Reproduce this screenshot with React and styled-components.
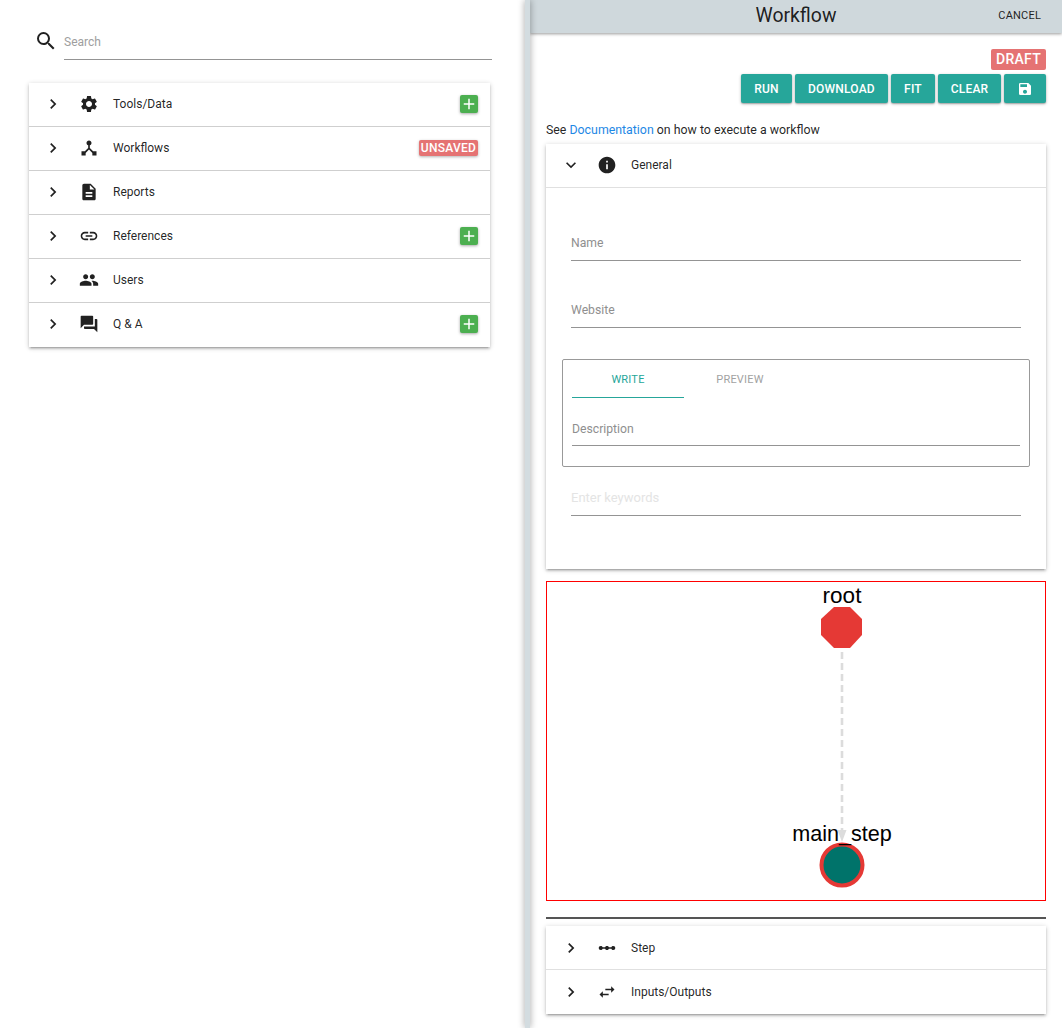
import React from 'react';
import styled, { createGlobalStyle } from 'styled-components';
import {
  MdSearch, MdChevronRight, MdExpandMore, MdSettings, MdDeviceHub, MdDescription,
  MdLink, MdPeople, MdQuestionAnswer, MdInfo, MdSave, MdLinearScale, MdSwapHoriz, MdAdd,
} from 'react-icons/md';

const GlobalStyle = createGlobalStyle`
  html, body {
    margin: 0;
    padding: 0;
    height: 100%;
    background: #fff;
    font-family: Roboto, "Liberation Sans", sans-serif;
    color: rgba(0, 0, 0, 0.87);
    overflow: hidden;
  }
  * { box-sizing: border-box; }
`;

const Page = styled.div`
  display: flex;
  width: 1062px;
  height: 1028px;
  overflow: hidden;
`;

const LeftPane = styled.div`
  width: 525px;
  flex: none;
  padding: 29px 35px 0 29px;
`;

const SearchRow = styled.div`
  display: flex;
  align-items: flex-start;
  height: 54px;
  margin-right: -2px;
`;

const SearchIcon = styled(MdSearch)`
  font-size: 24px;
  margin-left: 5px;
  margin-right: 6px;
  flex: none;
  color: #212121;
`;

const SearchField = styled.div`
  flex: 1;
  height: 31px;
  border-bottom: 1px solid #949494;
  font-size: 12px;
  line-height: 26px;
  color: #9e9e9e;
`;

const Card = styled.div`
  background: #fff;
  box-shadow: 0 1px 5px rgba(0, 0, 0, 0.2), 0 2px 2px rgba(0, 0, 0, 0.14), 0 3px 1px -2px rgba(0, 0, 0, 0.12);
`;

const Row = styled.div`
  display: flex;
  align-items: center;
  height: 44px;
  padding-left: ${p => (p.$inset ? 15 : 14)}px;
  padding-right: 12px;
  padding-bottom: ${p => p.$lift || 0}px;
  font-size: 12px;
  border-bottom: 1px solid ${p => p.$line || 'transparent'};
`;

const Chevron = styled.span`
  display: flex;
  width: 24px;
  margin-right: 10px;
  font-size: 20px;
  color: #212121;
`;

const RowIcon = styled.span`
  display: flex;
  justify-content: center;
  width: 24px;
  margin-right: 12px;
  font-size: 20px;
  color: #212121;
`;

const RowLabel = styled.span`
  flex: 1;
`;

const AddBadge = styled.span`
  display: flex;
  align-items: center;
  justify-content: center;
  width: 18px;
  height: 18px;
  border-radius: 2px;
  background: #4caf50;
  color: #fff;
  font-size: 18px;
  box-shadow: 0 1px 3px rgba(0, 0, 0, 0.35);
`;

const Unsaved = styled.span`
  height: 16px;
  padding: 0 2px;
  border-radius: 2px;
  background: #e57373;
  color: #fff;
  font-size: 12px;
  font-weight: 500;
  line-height: 16px;
  letter-spacing: 0.25px;
  box-shadow: 0 1px 3px rgba(0, 0, 0, 0.3);
`;

const Gutter = styled.div`
  position: relative;
  z-index: 2;
  width: 5px;
  flex: none;
  background: #d3dce0;
  box-shadow: 0 0 7px rgba(0, 0, 0, 0.4);
`;

const Drawer = styled.div`
  flex: 1;
  min-width: 0;
  background: #fff;
  display: flex;
  flex-direction: column;
`;

const Header = styled.div`
  position: relative;
  display: flex;
  align-items: center;
  justify-content: center;
  height: 33px;
  flex: none;
  background: #cfd8dc;
  box-shadow: 0 1px 3px rgba(0, 0, 0, 0.4);
  font-size: 19.4px;
  color: rgba(0, 0, 0, 0.87);
  padding-bottom: 3px;
`;

const Cancel = styled.span`
  position: absolute;
  right: 21px;
  top: 9px;
  font-size: 11px;
  letter-spacing: 0.2px;
`;

const Body = styled.div`
  padding: 16px 16px 0;
  display: flex;
  flex-direction: column;
`;

const StatusRow = styled.div`
  display: flex;
  justify-content: flex-end;
  height: 25px;
`;

const Draft = styled.span`
  height: 21px;
  width: 55px;
  text-align: center;
  border-radius: 2px;
  background: #e57373;
  color: #fff;
  font-size: 14px;
  font-weight: 500;
  line-height: 21px;
  letter-spacing: 0.3px;
`;

const Toolbar = styled.div`
  display: flex;
  justify-content: flex-end;
  gap: 3px;
  height: 29px;
`;

const ActionButton = styled.button`
  width: ${p => p.$w}px;
  padding: 0;
  border: 0;
  border-radius: 2px;
  display: flex;
  align-items: center;
  justify-content: center;
  background: #26a69a;
  color: #fff;
  font-family: inherit;
  font-size: 12px;
  font-weight: 500;
  letter-spacing: 0.2px;
  box-shadow: 0 1px 3px rgba(0, 0, 0, 0.3), 0 1px 1px rgba(0, 0, 0, 0.14);
`;

const DocsLine = styled.div`
  margin-top: 20px;
  height: 21px;
  font-size: 12.35px;
  line-height: 14px;
  a { color: #1e88e5; text-decoration: none; }
`;

const GeneralBody = styled.div`
  height: 381px;
  padding: 0 25px;
`;

const Field = styled.div`
  height: ${p => p.$h}px;
  border-bottom: 1px solid #949494;
  padding-top: ${p => p.$pt}px;
  font-size: ${p => (p.$faint ? 13 : 12.2)}px;
  line-height: 14px;
  color: ${p => (p.$faint ? '#e4e4e4' : '#8f8f8f')};
`;

const EditorBox = styled.div`
  margin: 31px -9px 0;
  height: 108px;
  border: 1px solid #999;
  border-radius: 2px;
  padding: 0 9px;
`;

const Tabs = styled.div`
  display: flex;
  height: 38px;
`;

const Tab = styled.div`
  width: 112px;
  padding-top: 14px;
  text-align: center;
  font-size: 11px;
  line-height: 12px;
  letter-spacing: 0.2px;
  color: ${p => (p.$active ? '#26a69a' : '#a2a2a2')};
  border-bottom: ${p => (p.$active ? '1px solid #26a69a' : 'none')};
`;

const Graph = styled.div`
  margin-top: 12px;
  height: 320px;
  border: 1px solid #f00;
`;

const GraphSvg = styled.svg`
  display: block;
  width: 100%;
  height: 100%;
`;

const NodeLabel = styled.text`
  font-family: "Liberation Sans", Arial, sans-serif;
  font-size: ${p => p.$size}px;
  fill: #000;
  text-anchor: middle;
`;

const Rule = styled.div`
  margin-top: 16px;
  height: 2px;
  background: #555;
`;

const LowerCard = styled(Card)`
  margin-top: 7px;
`;

const leftRows = [
  { label: 'Tools/Data', Icon: MdSettings, add: true },
  { label: 'Workflows', Icon: MdDeviceHub, unsaved: true },
  { label: 'Reports', Icon: MdDescription },
  { label: 'References', Icon: MdLink, add: true },
  { label: 'Users', Icon: MdPeople },
  { label: 'Q & A', Icon: MdQuestionAnswer, add: true },
];

function WorkflowGraph() {
  // node positions inside the 498x318 canvas
  return (
    <GraphSvg viewBox="0 0 498 318">
      <line x1="295" y1="70" x2="295" y2="248" stroke="#dcdcdc" strokeWidth="2.6" strokeDasharray="7 4" />
      <polygon points="290.5,248 299.5,248 295,260" fill="#dcdcdc" />
      <polygon points="287,25 303,25 315,37 315,53 303,66 287,66 274,53 274,37" fill="#e53935" />
      <circle cx="295" cy="283" r="20.5" fill="#00736a" stroke="#e53935" strokeWidth="4" />
      <NodeLabel $size={22.5} x="295" y="21">root</NodeLabel>
      <NodeLabel $size={21.6} x="295" y="259">main_step</NodeLabel>
    </GraphSvg>
  );
}

export default function App() {
  return (
    <Page>
      <GlobalStyle />
      <LeftPane>
        <SearchRow>
          <SearchIcon />
          <SearchField>Search</SearchField>
        </SearchRow>
        <Card>
          {leftRows.map((r, i) => (
            <Row key={r.label} $lift={2} $line={i < leftRows.length - 1 ? '#cfcfcf' : undefined}>
              <Chevron><MdChevronRight /></Chevron>
              <RowIcon><r.Icon /></RowIcon>
              <RowLabel>{r.label}</RowLabel>
              {r.add && <AddBadge><MdAdd /></AddBadge>}
              {r.unsaved && <Unsaved>UNSAVED</Unsaved>}
            </Row>
          ))}
        </Card>
      </LeftPane>
      <Gutter />
      <Drawer>
        <Header>
          Workflow
          <Cancel>CANCEL</Cancel>
        </Header>
        <Body>
          <StatusRow><Draft>DRAFT</Draft></StatusRow>
          <Toolbar>
            <ActionButton $w={51}>RUN</ActionButton>
            <ActionButton $w={93}>DOWNLOAD</ActionButton>
            <ActionButton $w={44}>FIT</ActionButton>
            <ActionButton $w={63}>CLEAR</ActionButton>
            <ActionButton $w={42}><MdSave size={16} /></ActionButton>
          </Toolbar>
          <DocsLine>See <a href="#docs">Documentation</a> on how to execute a workflow</DocsLine>
          <Card>
            <Row $inset $lift={1} $line="#e0e0e0">
              <Chevron><MdExpandMore /></Chevron>
              <RowIcon><MdInfo /></RowIcon>
              <RowLabel>General</RowLabel>
            </Row>
            <GeneralBody>
              <Field $h={73} $pt={48}>Name</Field>
              <Field $h={67} $pt={42}>Website</Field>
              <EditorBox>
                <Tabs>
                  <Tab $active>WRITE</Tab>
                  <Tab>PREVIEW</Tab>
                </Tabs>
                <Field $h={48} $pt={24}>Description</Field>
              </EditorBox>
              <Field $h={49} $pt={24} $faint>Enter keywords</Field>
            </GeneralBody>
          </Card>
          <Graph><WorkflowGraph /></Graph>
          <Rule />
          <LowerCard>
            <Row $inset $line="#e0e0e0">
              <Chevron><MdChevronRight /></Chevron>
              <RowIcon><MdLinearScale /></RowIcon>
              <RowLabel>Step</RowLabel>
            </Row>
            <Row $inset>
              <Chevron><MdChevronRight /></Chevron>
              <RowIcon><MdSwapHoriz /></RowIcon>
              <RowLabel>Inputs/Outputs</RowLabel>
            </Row>
          </LowerCard>
        </Body>
      </Drawer>
    </Page>
  );
}
